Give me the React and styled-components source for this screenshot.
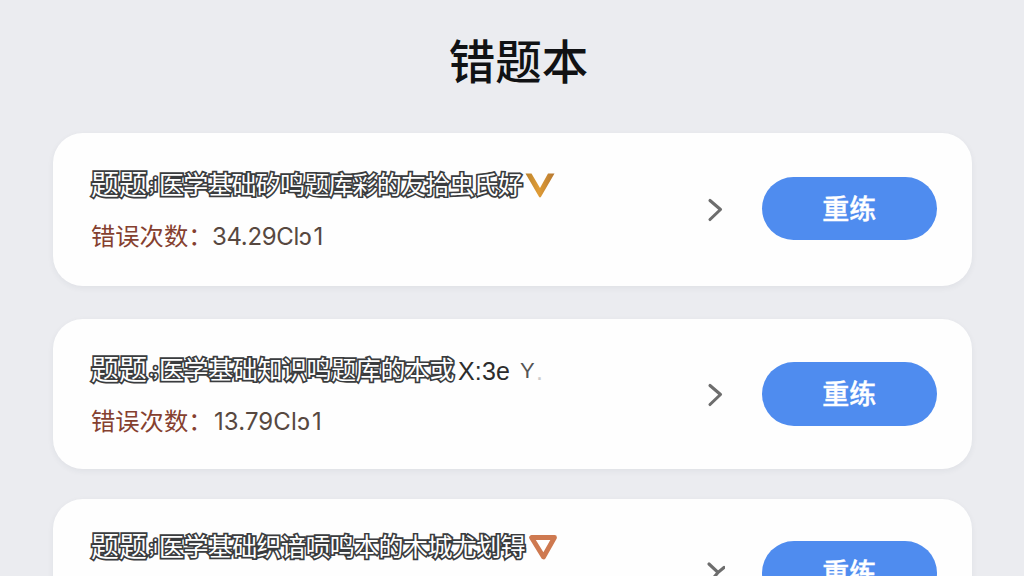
import React from "react";
import styled, { createGlobalStyle } from "styled-components";

const GlobalStyle = createGlobalStyle`
  html, body { margin: 0; height: 100%; overflow: hidden; background: #ebecf0; }
  * { box-sizing: border-box; }
  body { font-family: "Noto Sans CJK SC", sans-serif; }
`;

const Page = styled.main`
  height: 576px;
  overflow: hidden;
  padding: 29px 52px 0 53px;
  background: #ebecf0;
`;

const Title = styled.h1`
  margin: 0;
  height: 103.5px;
  padding-left: 12px;
  text-align: center;
  font-size: 46.5px;
  line-height: 60px;
  font-weight: 500;
  color: #111214;
`;

const List = styled.div`
  display: flex;
  flex-direction: column;
`;

const Card = styled.article`
  display: flex;
  align-items: flex-start;
  flex-shrink: 0;
  height: ${(p) => p.$height}px;
  margin-bottom: ${(p) => p.$gap}px;
  padding: ${(p) => p.$top}px 35.5px 0 38px;
  border-radius: 30px;
  background: #fefefe;
  box-shadow: 0 2px 6px rgba(40, 45, 60, 0.06);
`;

const Info = styled.div`
  flex: 1;
  min-width: 0;
  margin-top: ${(p) => (p.$raised ? -13 : -11)}px;
`;

const Question = styled.div`
  display: flex;
  align-items: center;
  height: 36px;
  white-space: pre;
`;

const Outlined = styled.span`
  flex: none;
  width: ${(p) => p.$width}px;
  font-size: ${(p) => p.$size}px;
  letter-spacing: ${(p) => p.$spacing || 0}px;
  line-height: 34px;
  padding-bottom: 2px;
  font-weight: 400;
  color: #fff;
  -webkit-text-stroke: 3.4px #3a3c3e;
  paint-order: stroke fill;
`;

const Plain = styled.span`
  flex: none;
  width: ${(p) => p.$width}px;
  padding-top: 4px;
  font: ${(p) => p.$size || 25}px/36px "Liberation Sans", sans-serif;
  letter-spacing: ${(p) => p.$spacing || 0}px;
  color: ${(p) => p.$color || "#2c2c2c"};
`;

const Count = styled.div`
  display: flex;
  align-items: center;
  margin-top: ${(p) => (p.$raised ? 18 : 15)}px;
  height: 36px;
  white-space: pre;
`;

const CountLabel = styled.span`
  flex: none;
  width: ${(p) => p.$width}px;
  font-size: 24.3px;
  line-height: 36px;
  color: #85402f;
`;

const CountValue = styled.span`
  padding-top: 4px;
  font: 24px/36px Inter, sans-serif;
  letter-spacing: ${(p) => p.$spacing}px;
  color: #574840;
`;

const LastDigit = styled.span`
  margin-left: 2px;
`;

const Chevron = styled.svg`
  flex: none;
  width: 18px;
  height: 26px;
  margin: 19px 37px 0 0;
`;

const Marker = styled.svg`
  flex: none;
  width: 30px;
  height: 28px;
  margin: 2px 0 0 2px;
`;

const Button = styled.button`
  flex: none;
  width: 174.5px;
  height: 63.5px;
  padding: 0 0 2px;
  border: 0;
  border-radius: 32px;
  background: #4f8cef;
  color: #fff;
  font: 500 27px/61px "Noto Sans CJK SC", sans-serif;
  -webkit-text-stroke: 0.4px #fff;
`;

const GoldMark = () => (
  <Marker viewBox="0 0 30 28">
    <defs>
      <linearGradient id="gold" x1="0" x2="1">
        <stop offset="0" stopColor="#b8822f" />
        <stop offset="0.45" stopColor="#e09c35" />
        <stop offset="1" stopColor="#b57832" />
      </linearGradient>
    </defs>
    <path d="M0.5 2.5H6.5L15 17L23 2.5H29.5L16 25.8Q15 27 14 25.8Z" fill="url(#gold)" />
  </Marker>
);

const CopperMark = () => (
  <Marker viewBox="0 0 30 28">
    <path d="M3.5 4.5H26.5L15.5 24Z" fill="#fff" stroke="#ce7950" strokeWidth="4.8" strokeLinejoin="round" />
  </Marker>
);

const records = [
  { height: 153.5, gap: 33, top: 44, mark: "gold", sep: ";i", text: "医学基础矽鸣题库彩的友拾虫氏好", textWidth: 364, spacing: -0.8, labelWidth: 121, value: "34.29Clɔ", valueSpacing: -0.35 },
  { height: 150, gap: 30, top: 43, sep: ".;", text: "医学基础知识鸣题库的本或", textWidth: 299, spacing: -0.4, labelWidth: 123, value: "13.79Clɔ", valueSpacing: 0.1, tail: true },
  { height: 153, gap: 0, top: 42, mark: "copper", sep: ";i", text: "医学基础织谙唝鸣本的木城尤划锝", textWidth: 367, spacing: -0.6, labelWidth: 122, value: "12.29Clɔ", valueSpacing: 0, crossed: true },
];

function Record({ r }) {
  return (
    <Card $height={r.height} $gap={r.gap} $top={r.top}>
      <Info $raised={r.crossed}>
        <Question>
          <Outlined $width={58} $size={28}>题题</Outlined>
          <Outlined $width={10} $size={18} $spacing={-1}>{r.sep}</Outlined>
          <Outlined $width={r.textWidth} $size={25} $spacing={r.spacing}>{r.text}</Outlined>
          {r.mark === "gold" && <GoldMark />}
          {r.mark === "copper" && <CopperMark />}
          {r.tail && (
            <>
              <Plain $width={62} $spacing={0.2}>X:3e</Plain>
              <Plain $width={16} $size={22} $color="#555">Y</Plain>
              <Plain $width={8} $color="#ccc">.</Plain>
            </>
          )}
        </Question>
        {!r.crossed && (
          <Count>
            <CountLabel $width={r.labelWidth}>错误次数：</CountLabel>
            <CountValue $spacing={r.valueSpacing}>{r.value}<LastDigit>1</LastDigit></CountValue>
          </Count>
        )}
      </Info>
      <Chevron viewBox="0 0 18 26" fill="none" stroke="#6d6d6d" strokeWidth="3.1" strokeLinecap="round">
        {r.crossed ? <path d="M2 4L11 12.5L17 7.5M11 12.5L3 22" /> : <path d="M3 4.5L13.5 13.5L3 23.5" strokeLinejoin="round" />}
      </Chevron>
      <Button>重练</Button>
    </Card>
  );
}

export default function App() {
  return (
    <>
      <GlobalStyle />
      <Page>
        <Title>错题本</Title>
        <List>
          {records.map((r, i) => <Record key={i} r={r} />)}
        </List>
      </Page>
    </>
  );
}
